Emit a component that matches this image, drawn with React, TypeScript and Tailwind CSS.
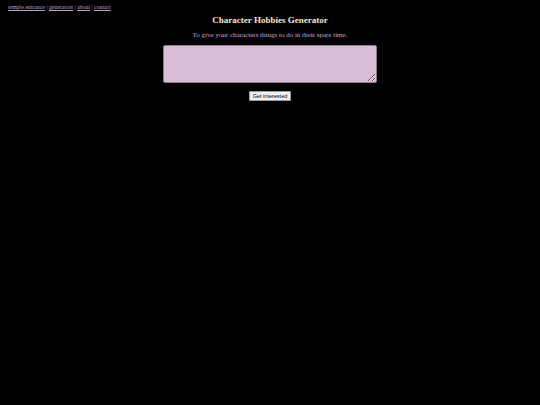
export default function App() {
  return (
    <div className="min-h-[405px] w-full bg-black font-['Liberation_Serif',serif]">
      {/* 顶部导航 */}
      <nav className="px-2 pt-[4px] text-[5.8px] leading-[7px] text-[#b8a0c0]">
        <a href="#" className="underline">temple entrance</a>
        <span> | </span>
        <a href="#" className="underline">generators</a>
        <span> | </span>
        <a href="#" className="underline">about</a>
        <span> | </span>
        <a href="#" className="underline">contact</a>
      </nav>

      <main className="flex flex-col items-center">
        <h1 className="mt-[3px] text-[9px] font-bold leading-[12px] text-[#f3e3c8]">
          Character Hobbies Generator
        </h1>
        <p className="mt-[5px] text-[7px] leading-[9px] text-[#c9a6d6]">
          To give your characters things to do in their spare time.
        </p>
        <textarea
          className="mt-[5px] h-[38px] w-[214px] rounded-[2px] border border-[#8a7a8c] bg-[#d8bfd8] outline-none"
          readOnly
        />
        <button className="mt-[8px] h-[10px] rounded-[1px] border border-[#999] bg-[#f0f0f0] px-[3px] font-['Liberation_Sans',sans-serif] text-[5.5px] leading-[8px] text-black">
          Get interested
        </button>
      </main>
    </div>
  );
}
